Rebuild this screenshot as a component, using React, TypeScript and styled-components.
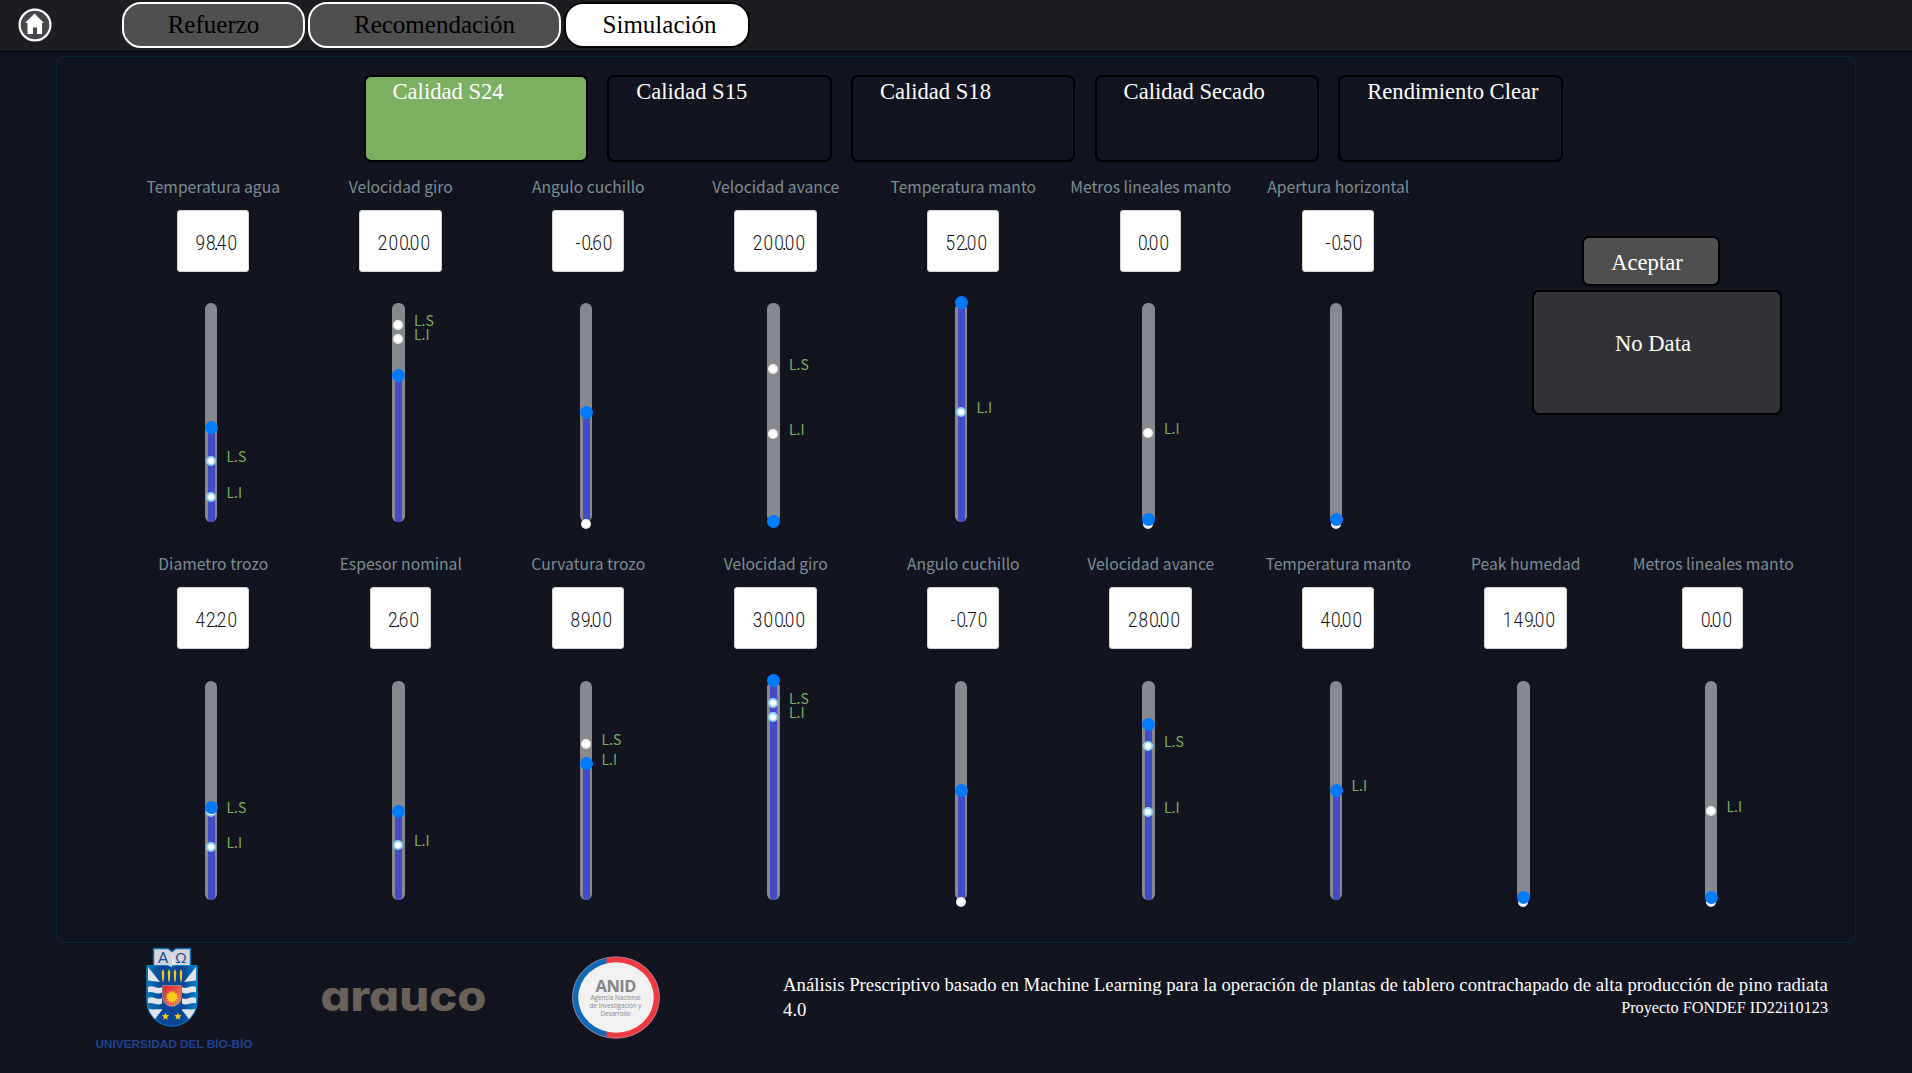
import React from "react";
import styled, { createGlobalStyle } from "styled-components";

const GlobalStyle = createGlobalStyle`
  *, *::before, *::after { box-sizing: border-box; }
  body {
    margin: 0;
    background: #12141f;
    color: #fff;
    font-family: "Liberation Serif", "Times New Roman", serif;
    overflow: hidden;
  }
`;

const Page = styled.div`
  width: 1912px;
  height: 1073px;
  display: flex;
  flex-direction: column;
`;

const Header = styled.header`
  height: 52px;
  flex: none;
  display: flex;
  align-items: flex-start;
  background: #1c1d21;
  border-bottom: 1px solid #000;
`;

const HomeLink = styled.a`
  width: 34px;
  height: 34px;
  margin: 7.5px 70px 0 18px;
  svg { display: block; }
`;

const Tabs = styled.nav`
  display: flex;
  gap: 3px;
  padding-top: 2px;
`;

const Tab = styled.button<{ $active?: boolean; $w: number }>`
  width: ${(p) => p.$w}px;
  height: 46px;
  padding: 0 0 1px ${(p) => (p.$active ? 5 : 0)}px;
  border-radius: 19px;
  border: 2px solid ${(p) => (p.$active ? "#000" : "#fff")};
  background: ${(p) => (p.$active ? "#fff" : "#4f4f4f")};
  color: #000;
  font: 25px "Liberation Serif", serif;
  white-space: nowrap;
`;

const Panel = styled.main`
  height: 887px;
  flex: none;
  margin: 4px 56px 0;
  padding: 18px 0 0 62px;
  border: 1px solid #062b36;
  border-radius: 7px;
`;

const Cards = styled.div`
  display: flex;
  gap: 19.2px;
  margin-left: 244.5px;
`;

const Card = styled.div<{ $active?: boolean }>`
  width: 224.5px;
  height: 87px;
  padding: 2px 0 0 27px;
  border: 2px solid #000;
  border-radius: 7px;
  background: ${(p) => (p.$active ? "#7bb062" : "transparent")};
  font-size: 22.6px;
  line-height: 26px;
  white-space: nowrap;
`;

const GaugeRow = styled.section`
  display: flex;
  height: 377.4px;
  &:first-of-type { margin-top: 13px; }
`;

const GaugeBox = styled.div`
  width: 187.5px;
  flex: none;
  display: flex;
  flex-direction: column;
  align-items: center;
`;

const GaugeLabel = styled.div`
  height: 24px;
  margin-left: 1px;
  color: #7d8d93;
  font: 15.7px/24px "Noto Sans CJK SC", "Noto Sans", sans-serif;
  white-space: nowrap;
`;

const Display = styled.div<{ $digits: number }>`
  width: ${(p) => 29 + p.$digits * 10.8}px;
  height: 62px;
  margin-top: 11px;
  padding: 3px 9.5px 0 0;
  display: flex;
  justify-content: flex-end;
  align-items: center;
  border: 1px solid #d5d5d8;
  border-radius: 3px;
  background: #fff;
  color: #111;
  font: 300 21px "Roboto", sans-serif;
`;

const Digits = styled.span`
  display: inline-block;
  letter-spacing: 1.4px;
  white-space: nowrap;
  transform: scaleX(0.82);
  transform-origin: right center;
`;

const Point = styled.span`
  display: inline-block;
  width: 0;
  text-indent: -3.5px;
  font-weight: 400;
`;

const Track = styled.div`
  position: relative;
  width: 12.5px;
  height: 219px;
  margin: 31.2px 4px 0 0;
  border-radius: 6px;
  background: #88898e;
`;

const Fill = styled.div`
  position: absolute;
  left: 3px;
  bottom: 0;
  width: 7px;
  border-radius: 3px;
  background: #444bc7;
`;

const Knob = styled.div`
  position: absolute;
  left: 0;
  width: 13px;
  height: 13px;
  margin-top: -6.5px;
  border-radius: 50%;
  background: #007bff;
`;

const Dot = styled.div<{ $active: boolean }>`
  position: absolute;
  left: 1px;
  width: 10px;
  height: 10px;
  margin-top: -5px;
  border-radius: 50%;
  border: 2px solid ${(p) => (p.$active ? "#91d5ff" : "#f0f0f0")};
  background: #fff;
`;

const Mark = styled.span`
  position: absolute;
  left: 22px;
  margin-top: -15px;
  color: #7bb062;
  font: 14px/20px "Noto Sans CJK SC", "Noto Sans", sans-serif;
  white-space: nowrap;
`;

const Actions = styled.aside`
  width: 250px;
  margin: 61px 0 0 100px;
  display: flex;
  flex-direction: column;
  gap: 4px;
`;

const AcceptButton = styled.button`
  width: 138px;
  height: 50px;
  margin-left: 50px;
  padding: 3px 7px 0 0;
  border: 2px solid #000;
  border-radius: 7px;
  background: #4f4f4f;
  color: #fff;
  font: 22.6px "Liberation Serif", serif;
`;

const DataBox = styled.div`
  height: 125px;
  padding: 39px 7px 0 0;
  border: 2px solid #000;
  border-radius: 7px;
  background: #323236;
  font-size: 22.6px;
  line-height: 26px;
  text-align: center;
`;

const Footer = styled.footer`
  flex: 1;
  display: flex;
  align-items: flex-start;
`;

const UbbLogo = styled.div`
  width: 158px;
  margin: 4px 0 0 95px;
  display: flex;
  flex-direction: column;
  align-items: center;
  svg { display: block; margin-right: 5px; }
  span {
    margin-top: 10px;
    color: #1f4391;
    font: bold 11.8px/15px "Liberation Sans", sans-serif;
    white-space: nowrap;
  }
`;

const WordmarkBox = styled.div`
  width: 164px;
  margin: 42px 0 0 69px;
  svg { display: block; overflow: visible; }
`;

const AnidLogo = styled.div`
  margin: 13px 0 0 86px;
  svg { display: block; }
`;

const Credits = styled.div`
  width: 1047px;
  margin: 29px 0 0 123px;
`;

const Title = styled.p`
  margin: 0;
  font-size: 18.75px;
  line-height: 25px;
`;

const Project = styled.p`
  margin: -24px 2px 0 0;
  font-size: 16.2px;
  line-height: 21px;
  text-align: right;
`;

interface GaugeData {
  label: string;
  value: string;
  knob: number;
  upper?: number;
  lower?: number;
  base?: boolean;
}

/* Positions are distances in px from the top of the track. */
const rows: GaugeData[][] = [
  [
    { label: "Temperatura agua", value: "98.40", knob: 124.5, upper: 158, lower: 194 },
    { label: "Velocidad giro", value: "200.00", knob: 72.5, upper: 22, lower: 36 },
    { label: "Angulo cuchillo", value: "-0.60", knob: 109.5, base: true },
    { label: "Velocidad avance", value: "200.00", knob: 218.5, upper: 66, lower: 131 },
    { label: "Temperatura manto", value: "52.00", knob: -0.5, lower: 109 },
    { label: "Metros lineales manto", value: "0.00", knob: 216.5, lower: 130, base: true },
    { label: "Apertura horizontal", value: "-0.50", knob: 216.5, base: true },
  ],
  [
    { label: "Diametro trozo", value: "42.20", knob: 126.5, upper: 131, lower: 166 },
    { label: "Espesor nominal", value: "2.60", knob: 130.5, lower: 164 },
    { label: "Curvatura trozo", value: "89.00", knob: 82.5, upper: 63, lower: 83 },
    { label: "Velocidad giro", value: "300.00", knob: -0.5, upper: 22, lower: 36 },
    { label: "Angulo cuchillo", value: "-0.70", knob: 109.5, base: true },
    { label: "Velocidad avance", value: "280.00", knob: 43.5, upper: 65, lower: 131 },
    { label: "Temperatura manto", value: "40.00", knob: 109.5, lower: 109.5 },
    { label: "Peak humedad", value: "149.00", knob: 216.5, base: true },
    { label: "Metros lineales manto", value: "0.00", knob: 216.5, lower: 130, base: true },
  ],
];

function Gauge({ data }: { data: GaugeData }) {
  const [whole, decimals] = data.value.split(".");
  const { knob, upper, lower, base } = data;
  return (
    <GaugeBox>
      <GaugeLabel>{data.label}</GaugeLabel>
      <Display $digits={data.value.length - 1}>
        <Digits>
          {whole}
          <Point>.</Point>
          {decimals}
        </Digits>
      </Display>
      <Track>
        {knob < 210 && <Fill style={{ height: 219 - knob }} />}
        {upper !== undefined && <Dot $active={upper > knob} style={{ top: upper }} />}
        {lower !== undefined && <Dot $active={lower > knob} style={{ top: lower }} />}
        {base && <Dot $active={false} style={{ top: 221 }} />}
        <Knob style={{ top: knob }} />
        {upper !== undefined && <Mark style={{ top: upper }}>L.S</Mark>}
        {lower !== undefined && <Mark style={{ top: lower }}>L.I</Mark>}
      </Track>
    </GaugeBox>
  );
}

const HomeIcon = () => (
  <svg width="34" height="34" viewBox="0 0 34 34">
    <circle cx="17" cy="17" r="15.4" fill="#46474a" stroke="#fff" strokeWidth="2.2" />
    <path d="M16.500 5.500 26 15h-2v11h-5v-6.500h-4V26H9.500V15H7z" fill="#fff" />
  </svg>
);

const star = (cx: number, cy: number, outer: number, inner: number, n: number) =>
  Array.from({ length: n * 2 }, (_, i) => {
    const r = i % 2 ? inner : outer;
    const a = (Math.PI * i) / n - Math.PI / 2;
    return `${(cx + r * Math.cos(a)).toFixed(2)},${(cy + r * Math.sin(a)).toFixed(2)}`;
  }).join(" ");

const Shield = () => (
  <svg width="52" height="80" viewBox="0 0 52 80">
    <defs>
      <linearGradient id="blue" x1="0" y1="0" x2="1" y2="0">
        <stop offset="0" stopColor="#0879bd" />
        <stop offset="0.3" stopColor="#0a4597" />
        <stop offset="0.7" stopColor="#0a4597" />
        <stop offset="1" stopColor="#0a83c8" />
      </linearGradient>
      <linearGradient id="red" x1="0" y1="0" x2="1" y2="1">
        <stop offset="0" stopColor="#d3242c" />
        <stop offset="1" stopColor="#f08a68" />
      </linearGradient>
    </defs>
    <path d="M7.500 1.500H22l4 3 4-3h14.500V19h-37z" fill="#d3d6dc" stroke="#0b67ac" strokeWidth="1.4" />
    <path d="M.8 18.500H22l4 2.500 4-2.500h21.200V54a25.200 25.200 0 0 1-50.400 0z" fill="url(#blue)" stroke="#0c7dc4" strokeWidth="1" />
    <path d="M26 5v15l-4-2h8z" fill="#e6e8ec" />
    <text x="17" y="16" fill="#164a92" fontFamily="Lato" fontSize="15" textAnchor="middle">Α</text>
    <text x="35" y="16" fill="#164a92" fontFamily="Lato" fontSize="14" textAnchor="middle">Ω</text>
    <g fill="#e1e3e8">
      <path d="M2 20 14 35 2 33.500zM50 20 38 35l12-1.500z" />
      <path d="M2 40c5-3 9 3 14 0v5.500c-5 3-9-2-14 0zM2 51c5-3 9 3 14 0v5.500c-5 3-9-2-14 0z" />
      <path d="M50 40c-5-3-9 3-14 0v5.500c5 3 9-2 14 0zM50 51c-5-3-9 3-14 0v5.500c5 3 9-2 14 0z" />
      <path d="M2.500 61.500c4 2 8 0 14 1L9 72q-5-5-6.500-10.500zM49.500 61.500c-4 2-8 0-14 1L43 72q5-5 6.500-10.500z" />
    </g>
    <g fill="#f6c915">
      {[17, 23, 29, 35].map((x) => (
        <path key={x} d={`M${x - 1.3} 25l1.300-3 1.300 3-.5 8-.8 2.500-.8-2.500z`} />
      ))}
      <polygon points={star(19.5, 69.5, 4, 1.7, 5)} />
      <polygon points={star(32, 69.5, 4, 1.7, 5)} />
    </g>
    <path d="M16.700 38.500h18.600V50a9.300 9.300 0 0 1-18.600 0z" fill="url(#red)" stroke="#d9b7a8" strokeWidth=".5" />
    <polygon points={star(26, 50, 7, 4.4, 14)} fill="#ffc91c" />
  </svg>
);

const AraucoWordmark = () => (
  <svg width="164" height="30" viewBox="0 0 164 30">
    <text
      x="-1.5"
      y="26"
      textLength="166"
      lengthAdjust="spacingAndGlyphs"
      fill="#6b6159"
      style={{ fontFamily: "Inter", fontWeight: 800, fontSize: 41, fontFeatureSettings: '"cv11", "ss04"' }}
    >
      arauco
    </text>
  </svg>
);

const AnidBadge = () => (
  <svg width="88" height="83" viewBox="0 0 88 83">
    <ellipse cx="44" cy="41.500" rx="43.800" ry="41" fill="#ef3a43" />
    <path d="M34.500 1.500A43.800 41 0 0 0 34.500 81.500z" fill="#0f69b4" />
    <ellipse cx="44" cy="41.500" rx="43.500" ry="40.700" fill="none" stroke="#9aa6b8" strokeWidth=".6" />
    <ellipse cx="44" cy="41.500" rx="37.800" ry="35.200" fill="#f1f1f2" />
    <g fill="#8a8a8a" textAnchor="middle" fontFamily="Open Sans">
      <text x="44" y="35.500" fontSize="16.500" fontWeight="700" fill="#858585" textLength="41">ANID</text>
      <text x="43.500" y="44" fontSize="6.400" textLength="50">Agencia Nacional</text>
      <text x="43.500" y="52" fontSize="6.400" textLength="52">de Investigación y</text>
      <text x="43.500" y="60" fontSize="6.400" textLength="30">Desarrollo</text>
    </g>
  </svg>
);

export default function App() {
  return (
    <Page>
      <GlobalStyle />
      <Header>
        <HomeLink><HomeIcon /></HomeLink>
        <Tabs>
          <Tab $w={183}>Refuerzo</Tab>
          <Tab $w={253}>Recomendación</Tab>
          <Tab $w={186} $active>Simulación</Tab>
        </Tabs>
      </Header>
      <Panel>
        <Cards>
          <Card $active>Calidad S24</Card>
          <Card>Calidad S15</Card>
          <Card>Calidad S18</Card>
          <Card>Calidad Secado</Card>
          <Card>Rendimiento Clear</Card>
        </Cards>
        {rows.map((row, i) => (
          <GaugeRow key={i}>
            {row.map((g) => (
              <Gauge key={g.label} data={g} />
            ))}
            {i === 0 && (
              <Actions>
                <AcceptButton>Aceptar</AcceptButton>
                <DataBox>No Data</DataBox>
              </Actions>
            )}
          </GaugeRow>
        ))}
      </Panel>
      <Footer>
        <UbbLogo>
          <Shield />
          <span>UNIVERSIDAD DEL BÍO-BÍO</span>
        </UbbLogo>
        <WordmarkBox><AraucoWordmark /></WordmarkBox>
        <AnidLogo><AnidBadge /></AnidLogo>
        <Credits>
          <Title>
            Análisis Prescriptivo basado en Machine Learning para la operación de plantas de tablero
            contrachapado de alta producción de pino radiata 4.0
          </Title>
          <Project>Proyecto FONDEF ID22i10123</Project>
        </Credits>
      </Footer>
    </Page>
  );
}
